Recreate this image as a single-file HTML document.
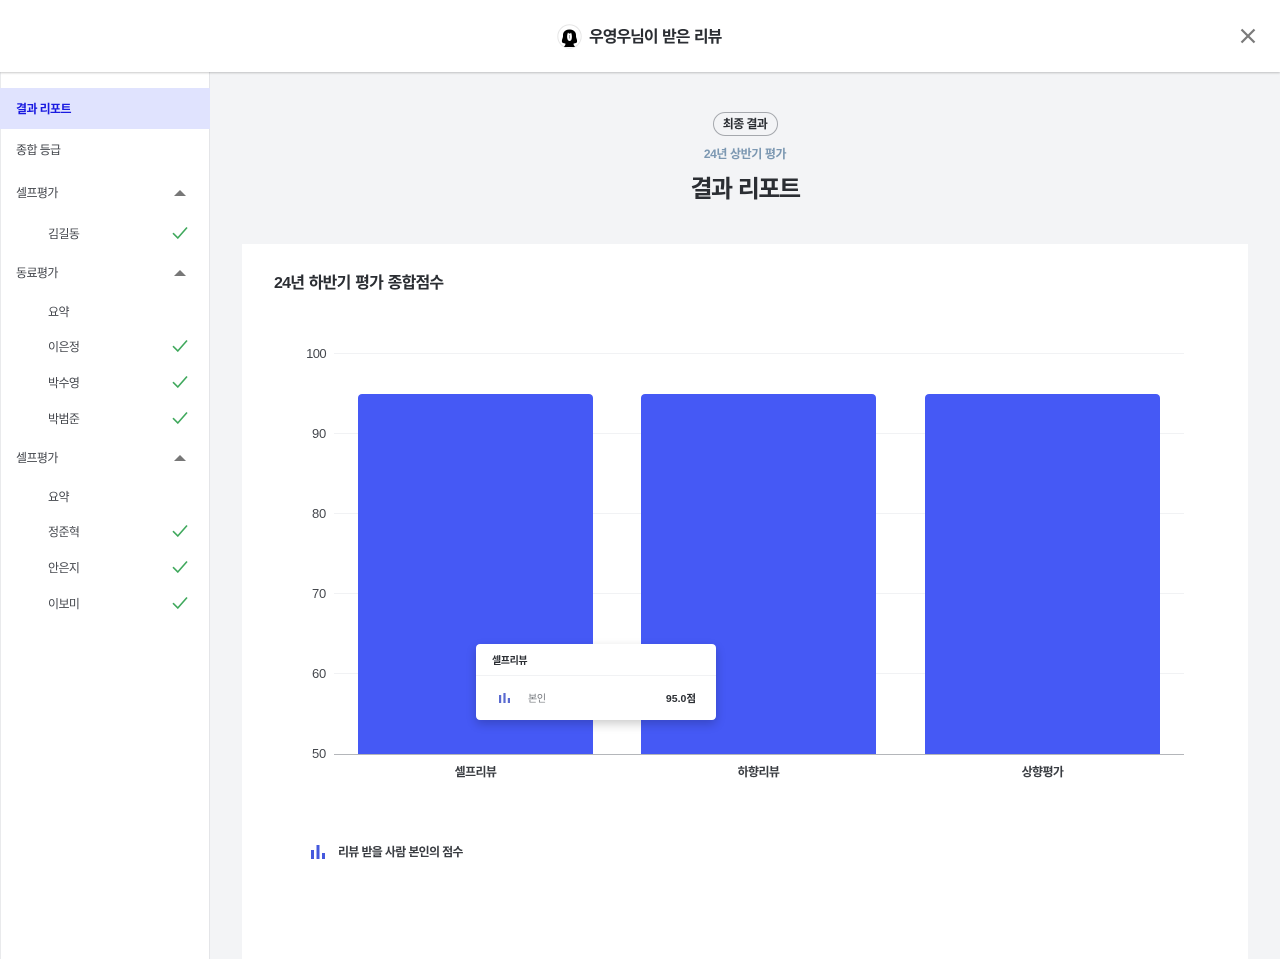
<!DOCTYPE html>
<html lang="ko"><head><meta charset="utf-8"><title>우영우님이 받은 리뷰</title>
<style>
html,body{margin:0;padding:0}
body{width:1280px;height:959px;position:relative;overflow:hidden;background:#f3f4f6;font-family:"Liberation Sans","Noto Sans CJK KR",sans-serif;color:#2b2e33}
.a{position:absolute;white-space:nowrap}
.t{position:absolute;white-space:nowrap;font-size:12px;line-height:16px;color:#44474d;letter-spacing:-.6px}
.c{transform:translateX(-50%)}
.line{position:absolute;left:334px;width:850px;height:1px;background:#f1f2f4}
.y{position:absolute;width:26px;left:300px;text-align:right;font-size:13px;line-height:16px;color:#44474d;letter-spacing:-.2px}
.bar{position:absolute;top:394px;width:235.300px;height:360px;background:#4559f5;border-radius:4px 4px 0 0}
.lb{font-size:12px;line-height:16px;font-weight:700;color:#3a3d42;letter-spacing:-.6px}
svg{position:absolute;display:block}
</style></head><body>
<div class="a" style="left:0;top:0;width:1280px;height:72px;background:#fff;box-shadow:0 1px 2px rgba(0,0,0,.22);z-index:3"></div>
<div style="position:absolute;z-index:4;left:0;top:0;width:1280px;height:72px">
<svg style="left:557px;top:24px" width="25" height="25" viewBox="0 0 25 25"><circle cx="12.500" cy="12.500" r="11.700" fill="#fff" stroke="#e6e6e6"/><path d="M12.500 5.500C8 5.500 5.800 8.500 6 11.500C6.200 14 4.500 15.500 5 18C5.500 19.500 7.500 19 8.500 19.800C8.500 21.200 7.500 22 7 23L18 23C17.500 22 16.500 21.200 16.500 19.800C17.500 19 19.500 19.500 20 18C20.500 15.500 18.800 14 19 11.500C19.200 8.500 17 5.500 12.500 5.500Z" fill="#000"/><path d="M11 8.500C10 10.500 9.800 13.500 10.600 15.500C11.500 17.500 13.700 17.500 14.500 15.500C15.200 13.500 15 10.500 14 8.500C13.500 10 12 10 11 8.500Z" fill="#fff"/><path d="M12.300 11V14.500" stroke="#666" stroke-width=".6"/></svg>
<div class="a" style="left:589px;top:27px;font-size:16px;line-height:22px;font-weight:700;color:#2b2e33;letter-spacing:-1px;word-spacing:1px">우영우님이 받은 리뷰</div>
<svg style="left:1240px;top:28px" width="16" height="16" viewBox="0 0 16 16"><path d="M1.500 1.500L14.500 14.500M14.500 1.500L1.500 14.500" stroke="#7a7a7a" stroke-width="2.200" fill="none"/></svg>
</div>

<div class="a" style="left:0;top:72px;width:208px;height:887px;background:#fff;border-left:1px solid #e9eaec;border-right:1px solid #e4e5e8"></div>
<div class="a" style="left:0;top:88px;width:210px;height:41px;background:#e0e3fe"></div>
<div class="t" style="left:16px;top:101px;color:#1a1ae0;font-weight:700">결과 리포트</div>
<div class="t" style="left:16px;top:142px">종합 등급</div>
<div class="t" style="left:16px;top:185px">셀프평가</div>
<div class="t" style="left:48px;top:226px">김길동</div>
<div class="t" style="left:16px;top:265px">동료평가</div>
<div class="t" style="left:48px;top:304px">요약</div>
<div class="t" style="left:48px;top:339px">이은정</div>
<div class="t" style="left:48px;top:375px">박수영</div>
<div class="t" style="left:48px;top:411px">박범준</div>
<div class="t" style="left:16px;top:450px">셀프평가</div>
<div class="t" style="left:48px;top:489px">요약</div>
<div class="t" style="left:48px;top:524px">정준혁</div>
<div class="t" style="left:48px;top:560px">안은지</div>
<div class="t" style="left:48px;top:596px">이보미</div>

<svg style="left:174px;top:190px" width="12" height="6"><path d="M0 6L6 0L12 6Z" fill="#777"/></svg>
<svg style="left:174px;top:270px" width="12" height="6"><path d="M0 6L6 0L12 6Z" fill="#777"/></svg>
<svg style="left:174px;top:455px" width="12" height="6"><path d="M0 6L6 0L12 6Z" fill="#777"/></svg>
<svg style="left:172px;top:226px" width="16" height="14" viewBox="0 0 16 14"><path d="M1 7.200L5.800 12L15 1.500" stroke="#3fa85c" stroke-width="1.600" fill="none"/></svg>
<svg style="left:172px;top:339px" width="16" height="14" viewBox="0 0 16 14"><path d="M1 7.200L5.800 12L15 1.500" stroke="#3fa85c" stroke-width="1.600" fill="none"/></svg>
<svg style="left:172px;top:375px" width="16" height="14" viewBox="0 0 16 14"><path d="M1 7.200L5.800 12L15 1.500" stroke="#3fa85c" stroke-width="1.600" fill="none"/></svg>
<svg style="left:172px;top:411px" width="16" height="14" viewBox="0 0 16 14"><path d="M1 7.200L5.800 12L15 1.500" stroke="#3fa85c" stroke-width="1.600" fill="none"/></svg>
<svg style="left:172px;top:524px" width="16" height="14" viewBox="0 0 16 14"><path d="M1 7.200L5.800 12L15 1.500" stroke="#3fa85c" stroke-width="1.600" fill="none"/></svg>
<svg style="left:172px;top:560px" width="16" height="14" viewBox="0 0 16 14"><path d="M1 7.200L5.800 12L15 1.500" stroke="#3fa85c" stroke-width="1.600" fill="none"/></svg>
<svg style="left:172px;top:596px" width="16" height="14" viewBox="0 0 16 14"><path d="M1 7.200L5.800 12L15 1.500" stroke="#3fa85c" stroke-width="1.600" fill="none"/></svg>

<div class="a" style="left:712.500px;top:112px;width:65px;height:24px;box-sizing:border-box;border:1px solid #a5a8ad;border-radius:12px;background:#f3f4f6;text-align:center;font-size:12px;line-height:22px;font-weight:700;color:#2b2e33;letter-spacing:-.6px">최종 결과</div>
<div class="a c" style="left:745px;top:146px;font-size:12px;line-height:16px;font-weight:700;color:#7c98b2;letter-spacing:-.4px">24년 상반기 평가</div>
<div class="a c" style="left:745px;top:174px;font-size:24px;line-height:32px;font-weight:700;color:#2b2e33;letter-spacing:-1.500px;word-spacing:1px">결과 리포트</div>

<div class="a" style="left:242px;top:244px;width:1006px;height:715px;background:#fff"></div>
<div class="a" style="left:274px;top:273px;font-size:16px;line-height:22px;font-weight:700;color:#2b2e33;letter-spacing:-.8px;word-spacing:1px">24년 하반기 평가 종합점수</div>

<div class="line" style="top:353px"></div>
<div class="line" style="top:433px"></div>
<div class="line" style="top:513px"></div>
<div class="line" style="top:593px"></div>
<div class="line" style="top:673px"></div>
<div class="line" style="top:754px;background:#b4b6ba"></div>
<div class="y" style="top:346px;letter-spacing:-.6px">100</div>
<div class="y" style="top:426px">90</div>
<div class="y" style="top:506px">80</div>
<div class="y" style="top:586px">70</div>
<div class="y" style="top:666px">60</div>
<div class="y" style="top:746px">50</div>
<div class="bar" style="left:358px"></div>
<div class="bar" style="left:641.200px"></div>
<div class="bar" style="left:924.700px"></div>
<div class="a c lb" style="left:475.500px;top:764px">셀프리뷰</div>
<div class="a c lb" style="left:758.500px;top:764px">하향리뷰</div>
<div class="a c lb" style="left:1042.500px;top:764px">상향평가</div>

<div class="a" style="left:476px;top:644px;width:240px;height:76px;background:#fff;border-radius:4px;box-shadow:0 4px 10px rgba(0,0,0,.2)"></div>
<div class="a" style="left:476px;top:675px;width:240px;height:1px;background:#f1f2f4"></div>
<div class="a" style="left:492px;top:655px;font-size:10px;line-height:14px;font-weight:700;color:#2b2e33;letter-spacing:-.4px">셀프리뷰</div>
<svg style="left:499px;top:693px" width="11" height="10"><path d="M0 2h2.200v8H0zM4.400 0h2.200v10h-2.200zM8.800 5H11v5H8.800z" fill="#5a6ad0"/></svg>
<div class="a" style="left:528px;top:693px;font-size:10px;line-height:14px;color:#75787e;letter-spacing:-.3px">본인</div>
<div class="a" style="right:584px;top:692px;font-size:10.500px;line-height:14px;font-weight:700;color:#2b2e33">95.0점</div>

<svg style="left:311px;top:845px" width="14" height="14"><path d="M0 5h3v9H0zM5.500 0h3v14h-3zM11 8h3v6h-3z" fill="#4559dd"/></svg>
<div class="a" style="left:338px;top:844px;font-size:12px;line-height:16px;font-weight:700;color:#3a3d42;letter-spacing:-.75px;word-spacing:.3px">리뷰 받을 사람 본인의 점수</div>
</body></html>
